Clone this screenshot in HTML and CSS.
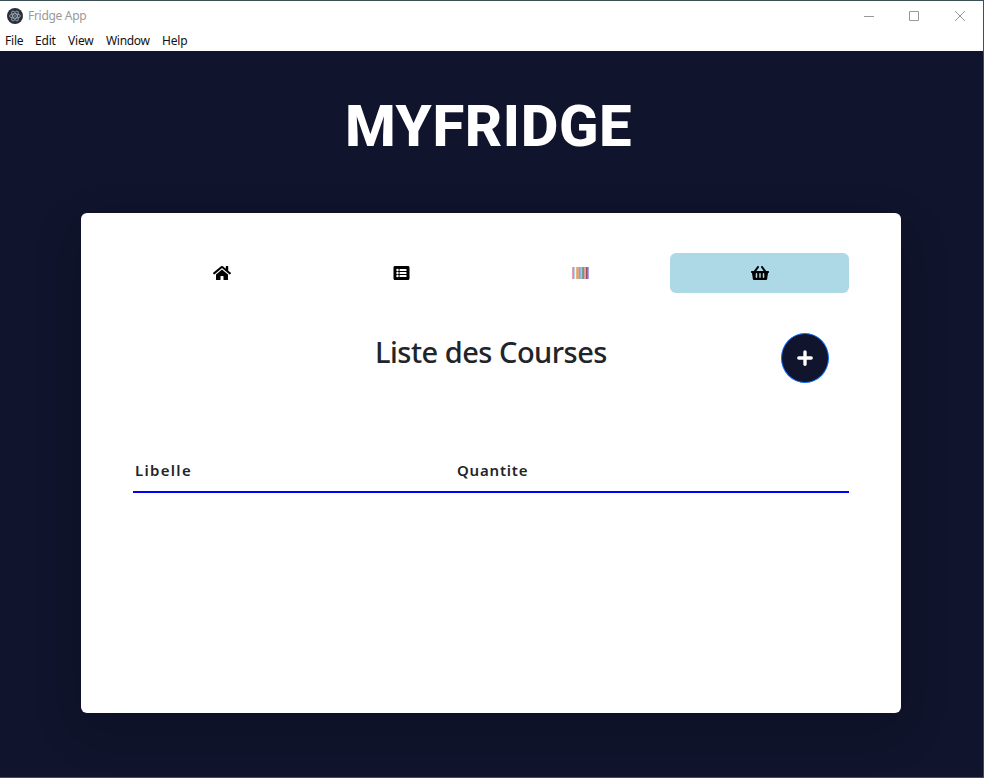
FILE: index.html
```
<!DOCTYPE html>
<html lang="fr">
<head>
<meta charset="utf-8">
<title>Fridge App</title>
<link rel="stylesheet" href="styles.css">
</head>
<body>
<div class="window">
  <header class="titlebar">
    <svg class="app-icon" viewBox="0 0 16 16"><circle cx="8" cy="8" r="8" fill="#2b2e3a"/><g fill="none" stroke="#9fb8bf" stroke-width=".8"><ellipse cx="8" cy="8" rx="5.5" ry="2.2"/><ellipse cx="8" cy="8" rx="5.5" ry="2.2" transform="rotate(60 8 8)"/><ellipse cx="8" cy="8" rx="5.5" ry="2.2" transform="rotate(120 8 8)"/></g><circle cx="8" cy="8" r=".8" fill="#9fb8bf"/></svg>
    <span class="app-name">Fridge App</span>
    <svg class="controls" viewBox="0 0 104 12" fill="none" stroke="#999"><path d="M1 6.500h10M46.500 1.500h9v9h-9z"/><path d="M92 1l10 10M102 1L92 11"/></svg>
  </header>
  <nav class="menu"><span class="m-file">File</span><span class="m-edit">Edit</span><span class="m-view">View</span><span class="m-window">Window</span><span class="m-help">Help</span></nav>
  <main class="page">
    <h1 class="logo">MYFRIDGE</h1>
    <section class="card">
      <nav class="tabs">
        <a class="tab nudged"><svg class="wide" viewBox="0 0 576 512"><path d="M280.370 148.260L96 300.110V464a16 16 0 0 0 16 16l112.060-.290a16 16 0 0 0 15.920-16V368a16 16 0 0 1 16-16h64a16 16 0 0 1 16 16v95.640a16 16 0 0 0 16 16.050L464 480a16 16 0 0 0 16-16V300L295.670 148.260a12.190 12.190 0 0 0-15.300 0zM571.600 251.470L488 182.560V44.050a12 12 0 0 0-12-12h-56a12 12 0 0 0-12 12v72.610L318.470 43a48 48 0 0 0-61 0L4.340 251.470a12 12 0 0 0-1.600 16.900l25.500 31A12 12 0 0 0 45.150 301l235.220-193.740a12.190 12.190 0 0 1 15.300 0L530.900 301a12 12 0 0 0 16.900-1.600l25.500-31a12 12 0 0 0-1.700-16.930z"/></svg></a>
        <a class="tab nudged"><svg class="square" viewBox="0 0 512 512"><path fill-rule="evenodd" d="M464 480H48c-26.500 0-48-21.500-48-48V80c0-26.500 21.500-48 48-48h416c26.500 0 48 21.500 48 48v352c0 26.500-21.500 48-48 48zM128 120a40 40 0 1 0 0 80 40 40 0 0 0 0-80zm0 96a40 40 0 1 0 0 80 40 40 0 0 0 0-80zm0 96a40 40 0 1 0 0 80 40 40 0 0 0 0-80zM204 128a12 12 0 0 0-12 12v40a12 12 0 0 0 12 12h200a12 12 0 0 0 12-12v-40a12 12 0 0 0-12-12zm0 96a12 12 0 0 0-12 12v40a12 12 0 0 0 12 12h200a12 12 0 0 0 12-12v-40a12 12 0 0 0-12-12zm0 96a12 12 0 0 0-12 12v40a12 12 0 0 0 12 12h200a12 12 0 0 0 12-12v-40a12 12 0 0 0-12-12z"/></svg></a>
        <a class="tab"><svg class="barcode" viewBox="0 0 17 12" shape-rendering="crispEdges"><path fill="#e9a3a3" d="M0 0h1v12H0z"/><path fill="#a8a2b8" d="M1 0h1v12H1z"/><path fill="#b5d8f5" d="M2 0h1v12H2z"/><path fill="#fff1df" d="M3 0h1v12H3z"/><path fill="#e8b878" d="M4 0h1v12H4z"/><path fill="#8bb8dc" d="M5 0h1v12H5z"/><path fill="#e5a598" d="M6 0h1v12H6z"/><path fill="#a19cae" d="M7 0h1v12H7z"/><path fill="#8eb9d8" d="M8 0h1v12H8z"/><path fill="#e8bb85" d="M9 0h1v12H9z"/><path fill="#769d96" d="M10 0h1v12h-1z"/><path fill="#768fa9" d="M11 0h1v12h-1z"/><path fill="#d4a0a2" d="M12 0h1v12h-1z"/><path fill="#a3bdd2" d="M13 0h1v12h-1z"/><path fill="#a34f52" d="M14 0h1v12h-1z"/><path fill="#728993" d="M15 0h1v12h-1z"/><path fill="#a5a1f5" d="M16 0h1v12h-1z"/></svg></a>
        <a class="tab active"><svg class="wide" viewBox="0 0 576 512"><path d="M576 216v16c0 13.255-10.745 24-24 24h-8l-26.113 182.788C514.509 462.435 494.257 480 470.370 480H105.630c-23.887 0-44.139-17.565-47.518-41.212L32 256h-8c-13.255 0-24-10.745-24-24v-16c0-13.255 10.745-24 24-24h67.341l106.780-146.821c10.395-14.292 30.407-17.453 44.701-7.058 14.293 10.395 17.453 30.408 7.058 44.701L170.477 192h235.046L326.120 82.821c-10.395-14.292-7.234-34.306 7.059-44.701 14.291-10.395 34.306-7.235 44.701 7.058L484.659 192H552c13.255 0 24 10.745 24 24zM312 392V280a24 24 0 0 0-48 0v112a24 24 0 0 0 48 0zm112 0V280a24 24 0 0 0-48 0v112a24 24 0 0 0 48 0zm-224 0V280a24 24 0 0 0-48 0v112a24 24 0 0 0 48 0z"/></svg></a>
      </nav>
      <div class="heading"><h2>Liste des Courses</h2><button class="add" aria-label="Ajouter"><svg viewBox="0 0 16 16"><path d="M8 2.500v11M2.500 8h11" stroke="#fff" stroke-width="3" stroke-linecap="round"/></svg></button></div>
      <div class="columns"><span class="c-name">Libelle</span><span class="c-qty">Quantite</span></div>
    </section>
  </main>
</div>
</body>
</html>
```
FILE: styles.css
```
* { box-sizing: border-box; }
body { margin: 0; background: #3c5058; font-family: "Noto Sans", sans-serif; overflow: hidden; }
.window { width: 983px; height: 778px; padding: 1px 0; display: flex; flex-direction: column; }
.titlebar { height: 29px; background: #fff; display: flex; align-items: center; padding: 0 16px 0 7px; color: #999; font-size: 12px; }
.app-icon { width: 16px; height: 16px; }
.app-name { margin-left: 5px; letter-spacing: -.3px; }
.controls { width: 104px; height: 12px; margin-left: auto; }
.menu { height: 21px; background: #fff; display: flex; padding-left: 5px; font-size: 12px; line-height: 22px; color: #111; letter-spacing: -.2px; }
.menu span { white-space: nowrap; }
.m-file { width: 30px; }
.m-edit { width: 33px; }
.m-view { width: 38px; }
.m-window { width: 56px; letter-spacing: -.3px; }
.page { flex: 1; min-height: 0; background: #10142c; }
.logo { margin: 0; height: 162px; padding: 39px 0 0 345px; color: #fff; font: 800 58px/72px Roboto, sans-serif; letter-spacing: .6px; white-space: nowrap; }
.card { width: 820px; height: 500px; margin-left: 81px; padding: 40px 52px; background: #fff; border-radius: 6px; box-shadow: 0 16px 48px rgba(0, 0, 0, .175); }
.tabs { display: grid; grid-template-columns: repeat(4, 1fr); height: 40px; }
.tab { display: flex; align-items: center; justify-content: center; border-radius: 6px; }
.nudged { padding-right: 1px; }
.active { background: #add8e6; }
.wide { width: 18px; height: 16px; }
.square { width: 17px; height: 16px; }
.barcode { width: 17px; height: 12px; }
.heading { display: flex; justify-content: space-between; margin-top: 40px; padding: 0 20px 0 242px; height: 50px; }
h2 { margin: 0; font-size: 29px; line-height: 38px; font-weight: 500; letter-spacing: -.5px; color: #212529; white-space: nowrap; }
.add { width: 48px; height: 50px; padding: 0; border: 1px solid #0d6efd; border-radius: 50%; background: #10142c; display: flex; align-items: center; justify-content: center; }
.add svg { width: 18px; height: 18px; }
.columns { display: flex; height: 50px; margin-top: 60px; padding: 15px 0 0 2px; border-bottom: 2px solid #00f; font-size: 15px; line-height: 24px; font-weight: 600; letter-spacing: 1.3px; color: #212529; }
.c-name { width: 322px; }
.c-qty { letter-spacing: .8px; }
```
